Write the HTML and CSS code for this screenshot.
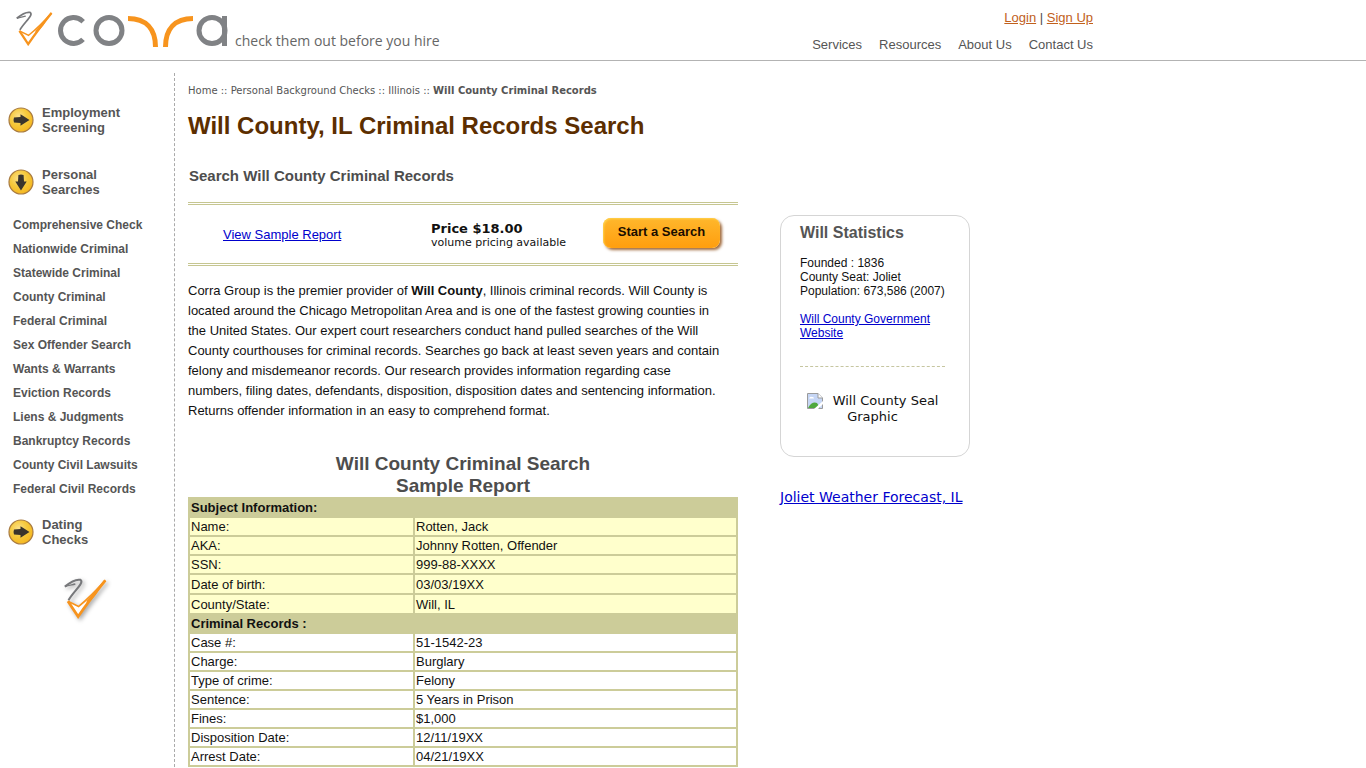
FILE: index.html
```html
<!DOCTYPE html>
<html lang="en">
<head>
<meta charset="utf-8">
<title>Will County, IL Criminal Records Search</title>
<link rel="stylesheet" href="styles.css">
</head>
<body>
<svg class="defs" width="0" height="0" aria-hidden="true">
  <defs>
    <radialGradient id="gold" cx="0.4" cy="0.35" r="0.7">
      <stop offset="0" stop-color="#fbe08a"/>
      <stop offset="0.5" stop-color="#f6c93c"/>
      <stop offset="1" stop-color="#f5b51c"/>
    </radialGradient>
    <symbol id="arrow" viewBox="0 0 26 26">
      <circle cx="13" cy="13" r="12" fill="url(#gold)" stroke="#a87b42" stroke-width="1.2"/>
      <path d="M6 10.4 L12.5 10 L12.5 7.3 Q16.5 9.8 21.5 13 Q16.5 16.2 12.5 18.7 L12.5 16 L6 15.6 Q5 13 6 10.4Z" fill="#3a342c"/>
    </symbol>
    <symbol id="arrow-down" viewBox="0 0 26 26">
      <circle cx="13" cy="13" r="12" fill="url(#gold)" stroke="#a87b42" stroke-width="1.2"/>
      <path transform="rotate(90 13 13)" d="M6 10.4 L12.5 10 L12.5 7.3 Q16.5 9.8 21.5 13 Q16.5 16.2 12.5 18.7 L12.5 16 L6 15.6 Q5 13 6 10.4Z" fill="#3a342c"/>
    </symbol>
    <symbol id="tick" viewBox="0 0 38 36">
      <path d="M3.500 20 L13 24 Q24 14 37 2 L13 34 Z" fill="#fff"/>
      <path d="M.8 7.500 C5 4 11 .7 14.500 1.500 C18.500 4 8 12 4 19.500" fill="none" stroke="#77787b" stroke-width="1.800"/>
      <path d="M.8 7.500 C4 6.300 7 6 10 5.200" fill="none" stroke="#77787b" stroke-width="1.300"/>
      <path d="M3.500 20.500 L12.500 34 Q22 20 36.500 2" fill="none" stroke="#f7941e" stroke-width="2.400" stroke-linejoin="miter"/>
      <path d="M3.500 20.500 L13 25 Q24 16 36.500 2" fill="none" stroke="#f7941e" stroke-width="1.500"/>
      <path d="M20 20 Q28 12 37 1 L28 15 L20 24Z" fill="#f7941e"/>
    </symbol>
  </defs>
</svg>

<header class="top">
  <div class="top-inner">
    <a class="brand" href="#" aria-label="Corra">
      <svg width="216" height="50" viewBox="0 0 216 50">
        <use href="#tick" x="1" y="7" width="37" height="35"/>
        <g fill="none" stroke="#808285" stroke-width="5">
          <circle cx="58.500" cy="26.500" r="13" stroke-dasharray="62 19.700" transform="rotate(43 58.500 26.500)"/>
          <circle cx="94" cy="26.500" r="13"/>
          <circle cx="197" cy="26.500" r="13"/>
          <line x1="209.500" y1="12" x2="209.500" y2="42"/>
        </g>
        <g fill="none" stroke="#f7941e" stroke-width="5">
          <path d="M113 14.500 C131 14.500 140.500 25 140.500 43"/>
          <path d="M150.500 43 C150.500 25 160 14.500 178 14.500"/>
        </g>
      </svg>
      <span class="tagline">check them out before you hire</span>
    </a>
    <div class="top-right">
      <div class="account"><a href="#">Login</a> | <a href="#">Sign Up</a></div>
      <nav class="main-nav">
        <a href="#">Services</a>
        <a href="#">Resources</a>
        <a href="#">About Us</a>
        <a href="#">Contact Us</a>
      </nav>
    </div>
  </div>
</header>

<div class="page">
  <aside class="sidebar">
    <a class="section employment" href="#"><svg width="26" height="26"><use href="#arrow"/></svg><span>Employment<br>Screening</span></a>
    <a class="section" href="#"><svg width="26" height="26"><use href="#arrow-down"/></svg><span>Personal<br>Searches</span></a>
    <ul class="links">
      <li><a href="#">Comprehensive Check</a></li>
      <li><a href="#">Nationwide Criminal</a></li>
      <li><a href="#">Statewide Criminal</a></li>
      <li><a href="#">County Criminal</a></li>
      <li><a href="#">Federal Criminal</a></li>
      <li><a href="#">Sex Offender Search</a></li>
      <li><a href="#">Wants &amp; Warrants</a></li>
      <li><a href="#">Eviction Records</a></li>
      <li><a href="#">Liens &amp; Judgments</a></li>
      <li><a href="#">Bankruptcy Records</a></li>
      <li><a href="#">County Civil Lawsuits</a></li>
      <li><a href="#">Federal Civil Records</a></li>
    </ul>
    <a class="section" href="#"><svg width="26" height="26"><use href="#arrow"/></svg><span>Dating<br>Checks</span></a>
    <svg class="side-mark" width="43" height="41"><use href="#tick"/></svg>
  </aside>

  <main class="content">
    <nav class="crumbs"><a href="#">Home</a> :: <a href="#">Personal Background Checks</a> :: <a href="#">Illinois</a> :: <strong>Will County Criminal Records</strong></nav>
    <h1>Will County, IL Criminal Records Search</h1>
    <h2>Search Will County Criminal Records</h2>
    <section class="offer">
      <a class="sample" href="#">View Sample Report</a>
      <div class="price"><strong>Price $18.00</strong><span>volume pricing available</span></div>
      <button class="start" type="button">Start a Search</button>
    </section>
    <p class="intro">Corra Group is the premier provider of <strong>Will County</strong>, Illinois criminal records. Will County is located around the Chicago Metropolitan Area and is one of the fastest growing counties in the United States. Our expert court researchers conduct hand pulled searches of the Will County courthouses for criminal records. Searches go back at least seven years and contain felony and misdemeanor records. Our research provides information regarding case numbers, filing dates, defendants, disposition, disposition dates and sentencing information. Returns offender information in an easy to comprehend format.</p>
    <table class="report">
      <caption>Will County Criminal Search<br>Sample Report</caption>
      <tbody class="subject">
        <tr><th colspan="2" scope="colgroup">Subject Information:</th></tr>
        <tr><td class="label">Name:</td><td>Rotten, Jack</td></tr>
        <tr><td>AKA:</td><td>Johnny Rotten, Offender</td></tr>
        <tr><td>SSN:</td><td>999-88-XXXX</td></tr>
        <tr class="tall"><td>Date of birth:</td><td>03/03/19XX</td></tr>
        <tr class="tall"><td>County/State:</td><td>Will, IL</td></tr>
      </tbody>
      <tbody class="records">
        <tr><th colspan="2" scope="colgroup">Criminal Records :</th></tr>
        <tr><td>Case #:</td><td>51-1542-23</td></tr>
        <tr><td>Charge:</td><td>Burglary</td></tr>
        <tr><td>Type of crime:</td><td>Felony</td></tr>
        <tr><td>Sentence:</td><td>5 Years in Prison</td></tr>
        <tr><td>Fines:</td><td>$1,000</td></tr>
        <tr><td>Disposition Date:</td><td>12/11/19XX</td></tr>
        <tr><td>Arrest Date:</td><td>04/21/19XX</td></tr>
      </tbody>
    </table>
  </main>

  <aside class="facts">
    <section class="card">
      <h3>Will Statistics</h3>
      <p>Founded : 1836<br>County Seat: Joliet<br>Population: 673,586 (2007)</p>
      <p><a href="#">Will County Government Website</a></p>
      <div class="seal">
        <svg width="16" height="16" viewBox="0 0 16 16">
          <path d="M.5.5H11L15.500 5V15.500H.5Z" fill="#c6d6f5" stroke="#9b9b9b"/>
          <path d="M2 5.500Q3 3 5 4Q7 3.500 7 5.500Z" fill="#fff"/>
          <path d="M1 15Q5 8 10 10L13 15Z" fill="#4fa83d"/>
          <path d="M11 .5V5H15.500" fill="#fff" stroke="#9b9b9b"/>
          <path d="M7 16L16 8V11L11 16Z" fill="#fff"/>
        </svg>
        <span>Will County Seal</span><br>Graphic
      </div>
    </section>
    <a class="weather" href="#">Joliet Weather Forecast, IL</a>
  </aside>
</div>
</body>
</html>
```
FILE: styles.css
```css
* { box-sizing: border-box; }
body {
  margin: 0;
  background: #fff;
  color: #111;
  font: 13px/15px "Liberation Sans", Arial, sans-serif;
}
a { color: #0000cc; }
.defs { position: absolute; }
h1, h2, h3, p, ul { margin: 0; padding: 0; }

.top { border-bottom: 1px solid #b3b3b3; }
.top-inner {
  display: flex;
  justify-content: space-between;
  max-width: 1093px;
  height: 60px;
  padding-left: 15px;
}
.brand { display: flex; align-items: flex-start; padding-top: 4px; text-decoration: none; }
.tagline {
  margin: 27px 0 0 4px;
  color: #666;
  font: 14px/20px "Open Sans", sans-serif;
}
.top-right { padding-top: 10px; color: #4d4d4d; text-align: right; }
.account a { color: #c1601c; }
.main-nav { display: flex; gap: 17px; margin-top: 12px; }
.main-nav a { color: #555; text-decoration: none; }

.page { display: flex; align-items: flex-start; padding-top: 12px; }
.sidebar {
  flex: 0 0 175px;
  min-height: 694px;
  padding: 32px 0 0 8px;
  border-right: 1px dashed #aaa;
}
.section {
  display: flex;
  align-items: center;
  gap: 8px;
  color: #555;
  font-weight: bold;
  text-decoration: none;
}
.employment { margin-bottom: 32px; }
.links { margin: 16px 0 16px 5px; list-style: none; }
.links li { font-size: 12px; line-height: 24px; }
.links a { color: #555; font-weight: bold; text-decoration: none; }
.side-mark { display: block; margin: 31px 0 0 56px; overflow: visible; filter: drop-shadow(2px 2px 2px #aaa); }

.content { flex: 0 1 550px; margin-left: 13px; }
.crumbs {
  padding-top: 11px;
  color: #555;
  font: 10px/14px "DejaVu Sans", Verdana, sans-serif;
}
.crumbs a { color: #555; text-decoration: none; }
h1 { margin-top: 14px; color: #5c2e00; font-size: 24px; line-height: 28px; }
h2 { margin: 27px 0 17px 1px; color: #4d4d4d; font-size: 15px; line-height: 18px; }
.offer {
  display: flex;
  align-items: center;
  height: 64px;
  padding: 0 18px 0 35px;
  border: 3px double #c6c691;
  border-width: 3px 0;
}
.sample { width: 208px; }
.price {
  display: flex;
  flex-direction: column;
  padding-top: 2px;
  font: 11px/14px "DejaVu Sans", Verdana, sans-serif;
}
.price strong { font-size: 13px; line-height: 15px; }
.start {
  height: 30px;
  width: 117px;
  margin: 0 0 3px auto;
  padding: 0 0 3px;
  border: 0;
  border-radius: 8px;
  background: linear-gradient(#ffb72c, #ff9e0e);
  box-shadow: inset 1px 1px 2px #ffd34c, 2px 2px 3px #a06a3c;
  color: #1a0d00;
  font: bold 13px/15px "Liberation Sans", Arial, sans-serif;
}
.intro { margin: 15px 0 32px; padding-right: 14px; line-height: 20px; }
.report {
  width: 100%;
  border-spacing: 2px;
  background: #cccc99;
}
.report caption {
  background: #fff;
  color: #4d4d4d;
  font-size: 19px;
  font-weight: bold;
  line-height: 22px;
}
.report td, .report th { padding: 1px; text-align: left; }
.label { width: 223px; }
.subject td { background: #ffffcc; }
.records td { background: #fff; }
.tall td { height: 18px; }

.facts { flex: 0 0 190px; margin: 142px 0 0 42px; }
.card {
  min-height: 242px;
  padding: 7px 24px 0 19px;
  border: 1px solid #d5d5d5;
  border-radius: 14px;
}
.card h3 { color: #555; font-size: 16px; line-height: 20px; }
.card p { margin-top: 14px; font-size: 12px; line-height: 14px; white-space: nowrap; }
.card p + p { white-space: normal; }
.card h3 + p { margin-top: 13px; }
.seal {
  margin-top: 26px;
  padding-top: 26px;
  border-top: 1px dashed #c6c6a0;
  text-align: center;
  white-space: nowrap;
  font: 13px/16px "DejaVu Sans", Verdana, sans-serif;
}
.seal svg { margin-right: 6px; vertical-align: top; }
.weather {
  display: block;
  margin-top: 32px;
  font: 14px/16px "DejaVu Sans", Verdana, sans-serif;
  white-space: nowrap;
}
```
